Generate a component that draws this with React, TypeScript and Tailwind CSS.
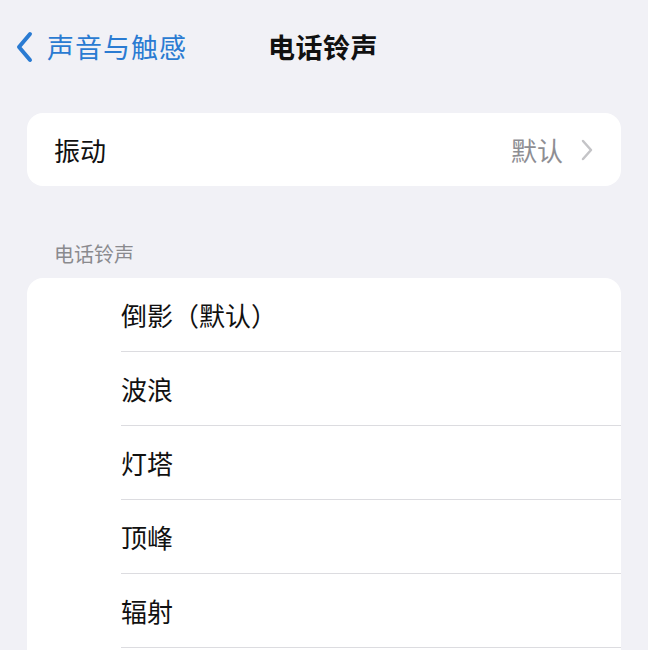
import React from 'react';

const font = { fontFamily: '"Noto Sans CJK SC", "Liberation Sans", sans-serif' };

const ringtones = ['倒影（默认）', '波浪', '灯塔', '顶峰', '辐射', ''];

const App: React.FC = () => {
  return (
    <div className="w-[648px] h-[650px] overflow-hidden bg-[#f1f1f6]" style={font}>
      {/* 导航栏 */}
      <div className="relative h-[92px] flex items-center">
        <div className="flex items-center pl-[14px] pt-[1px]">
          <svg width="22" height="32" viewBox="0 0 22 32" className="mr-[11px]">
            <path d="M16 3 L5 16 L16 29" fill="none" stroke="#2a7bd2" strokeWidth="4" strokeLinecap="round" strokeLinejoin="round" />
          </svg>
          <span className="text-[27px] leading-none text-[#2a7bd2] tracking-[1px]">声音与触感</span>
        </div>
        <span className="absolute left-[268px] text-[27px] leading-none font-bold text-[#111] tracking-[0.5px]">电话铃声</span>
      </div>

      {/* 振动 */}
      <div className="mx-[27px] mt-[21px] h-[73px] bg-white rounded-[16px] flex items-center pl-[27px] pr-[28px]">
        <span className="text-[26px] text-[#111] flex-1">振动</span>
        <span className="text-[26px] text-[#8e8e93] mr-[18px]">默认</span>
        <svg width="12" height="22" viewBox="0 0 12 22">
          <path d="M2 2 L10 11 L2 20" fill="none" stroke="#c4c4c7" strokeWidth="2.5" strokeLinecap="round" strokeLinejoin="round" />
        </svg>
      </div>

      {/* 电话铃声列表 */}
      <div className="pl-[54px] mt-[58px] h-[34px] text-[20px] text-[#8a8a8e] leading-none">电话铃声</div>
      <div className="mx-[27px] bg-white rounded-t-[16px]">
        {ringtones.map((name, i) => (
          <div key={i} className="pl-[94px]">
            <div className={`h-[74px] flex items-center text-[26px] text-[#111] ${i < ringtones.length - 1 ? 'border-b border-[#dcdce0]' : ''}`}>
              {name}
            </div>
          </div>
        ))}
      </div>
    </div>
  );
};

export default App;
